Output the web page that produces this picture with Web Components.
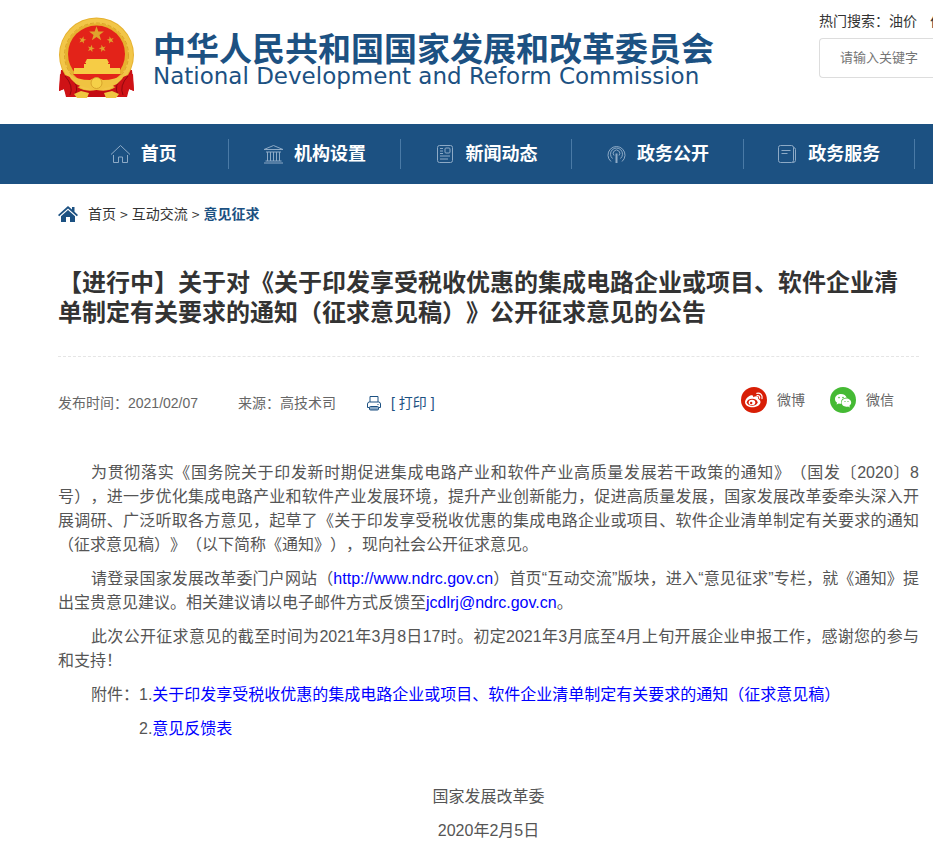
<!DOCTYPE html>
<html lang="zh-CN">
<head>
<meta charset="utf-8">
<title>中华人民共和国国家发展和改革委员会</title>
<style>
  body {
    --blue: #1c5182;
    margin: 0;
    background: #fff;
    color: #333;
    font: 14px/20px "Liberation Sans", "Noto Sans CJK SC", sans-serif;
    text-spacing-trim: space-all;
  }
</style>
</head>
<body>
<site-header></site-header>
<site-nav>
  <nav-item icon="home">首页</nav-item>
  <nav-item icon="bank">机构设置</nav-item>
  <nav-item icon="news">新闻动态</nav-item>
  <nav-item icon="signal">政务公开</nav-item>
  <nav-item icon="book">政务服务</nav-item>
</site-nav>
<main>
  <bread-crumb></bread-crumb>
  <notice-article>
    <span slot="title">【进行中】关于对《关于印发享受税收优惠的集成电路企业或项目、软件企业清单制定有关要求的通知（征求意见稿）》公开征求意见的公告</span>
    <article-meta slot="meta" date="2021/02/07" source="高技术司">
      <share-link type="weibo">微博</share-link>
      <share-link type="wechat">微信</share-link>
    </article-meta>
  </notice-article>
</main>

<script>
const ICONS = {
  home: '<path d="M1 10.5 10.500 1.500 20 10.500M3.500 11v7.500h5v-5.500h4v5.500h5V11"/>',
  bank: '<path d="M1 5.500 10.500 1.500 20 5.500zM3 8h15M4.500 8v9M7.500 8v9M10.500 8v9M13.500 8v9M16.500 8v9M2.500 17h16M1 19h19"/>',
  news: '<rect x="2.500" y="1.500" width="15" height="17" rx="2"/><rect x="10" y="4" width="5" height="5" rx="1"/><path d="M5 4.500h3M5 7h3M5 9.500h3M5 12h10M5 15h8"/>',
  signal: '<path d="M5 17.500a8.500 8.500 0 1 1 11 0M6.500 14.500a6 6 0 1 1 8 0M8 11.500a3.300 3.300 0 1 1 5 0"/><path d="M10.500 9.500v9.500" stroke-width="2"/>',
  book: '<rect x="1.500" y="1.500" width="15" height="17" rx="2"/><path d="M16.500 3.500q2 0 2 2v11q0 2-3 2M4.500 6.500h9M4.500 9.500h6"/>'
};

const SHARE = {
  weibo: `
    <circle cx="13" cy="13" r="13" fill="#d81e06"/>
    <path fill="#fff" d="M10.300 8.300C8.500 8 4 12 4 15.200c0 3 3.700 5 7.500 5 4.700 0 8-2.700 8-5.300 0-1.700-1.400-2.500-2.400-2.800.5-1.500.1-2.500-1.100-2.700-1.200-.2-2.600.3-3.900.8.400-1.200.1-2.100-1.800-1.900z"/>
    <ellipse cx="11.200" cy="15.300" rx="5.400" ry="3.500" fill="#d81e06"/>
    <ellipse cx="11" cy="15.400" rx="3.300" ry="2.600" fill="#fff"/>
    <circle cx="10.200" cy="16" r="1.200" fill="#d81e06"/>
    <path d="M15.800 6.300c3.500-.8 6.200 2 5.200 5.400M16.100 8.700c1.700-.4 3 .9 2.500 2.500" fill="none" stroke="#fff" stroke-width="1.200" stroke-linecap="round"/>`,
  wechat: `
    <circle cx="13" cy="13" r="13" fill="#45ba34"/>
    <path fill="#fff" d="M11 7c-3.600 0-6 2.300-6 5 0 1.600.8 2.900 2.100 3.800L6.500 17.600l2.300-1.100q1.100.3 2.400.3C10.300 13 13 10.700 16.700 10.800 16.100 8.500 13.800 7 11 7z"/>
    <path fill="#fff" d="M16.400 11.500c-2.800 0-4.900 1.900-4.900 4.100s2.100 4.100 4.900 4.100q.9 0 1.700-.3l1.700 1-.4-1.600c1.100-.8 1.800-1.900 1.800-3.200 0-2.200-2.200-4.100-4.800-4.100z"/>
    <g fill="#45ba34"><circle cx="9" cy="10.600" r=".8"/><circle cx="13" cy="10.600" r=".8"/><circle cx="15" cy="14.500" r=".6"/><circle cx="18" cy="14.500" r=".6"/></g>`
};

const STAR = 'M0-10 2.400-3.100 9.500-3.100 3.800 1.200 5.900 8.100 0 4-5.900 8.100-3.800 1.200-9.500-3.100-2.400-3.100z';

class SiteHeader extends HTMLElement {
  constructor() {
    super();
    this.attachShadow({mode: 'open'});
    this.shadowRoot.innerHTML = `
      <style>
        :host { display: block; overflow: hidden; }
        header { display: flex; height: 124px; padding-left: 58px; }
        .logo { display: flex; flex: none; gap: 17px; padding-top: 16px; color: var(--blue); text-decoration: none; }
        .logo svg { width: 78px; height: 84px; }
        .names { display: flex; flex-direction: column; padding-top: 14px; }
        .zh { font: bold 33px/34px "Noto Sans CJK SC", sans-serif; white-space: nowrap; }
        .en { font: 23px/24px "DejaVu Sans", sans-serif; white-space: nowrap; }
        .search { flex: 1; min-width: 0; margin-left: 105px; padding-top: 11px; }
        .hot { display: flex; margin-bottom: 7px; white-space: nowrap; }
        .hot a { flex: none; margin-right: 13px; color: inherit; text-decoration: none; }
        input {
          box-sizing: border-box;
          width: 100%;
          height: 40px;
          padding: 0 0 4px 20px;
          border: 1px solid #ddd;
          border-right: 0;
          border-radius: 4px 0 0 4px;
          font: 13px "Noto Sans CJK SC", sans-serif;
        }
        input::placeholder { color: #757575; }
      </style>
      <header>
        <a class="logo" href="#">
          <svg viewBox="0 0 78 84" aria-hidden="true">
            <path d="M3 54 1 75l5-2 3 8h59l3-8 5 2-2-21z" fill="#c90f14"/>
            <circle cx="38.500" cy="39" r="37.500" fill="#e6b12f"/>
            <circle cx="38.500" cy="39" r="34" fill="none" stroke="#f2c648" stroke-width="5"/>
            <circle cx="38.500" cy="39" r="32" fill="none" stroke="#dba32a" stroke-width="1" stroke-dasharray="4 2"/>
            <circle cx="38.500" cy="38" r="28.500" fill="#e32319"/>
            <g fill="#dfa32d">
              <path d="${STAR}" transform="translate(38.500 18) scale(.78)"/>
              <path d="${STAR}" transform="translate(24.500 24) rotate(15) scale(.38)"/>
              <path d="${STAR}" transform="translate(52.500 24) rotate(-15) scale(.38)"/>
              <path d="${STAR}" transform="translate(33 32.500) rotate(15) scale(.38)"/>
              <path d="${STAR}" transform="translate(44.500 32.500) rotate(-15) scale(.38)"/>
            </g>
            <path d="M29 43h20l2 4H27zM28 47h22v1H28zM26 48h26v4H26zM16 52h46v6H16z" fill="#f6cc45"/>
            <path d="M15 58h48l-8 7H22z" fill="#e32319"/>
            <path d="M2 58q13 2 22 11l-6 3 3 9H8l-2-8-5 2zM75 58q-13 2-22 11l6 3-3 9h13l2-8 5 2z" fill="#cf1216"/>
            <path d="M7 60q9 10 5 19M12 61q10 8 5 18M70 60q-9 10-5 19M65 61q-10 8-5 18" fill="none" stroke="#8f070d" stroke-width="1"/>
            <path d="M10 58q10 6 22 6 6-4 13 0 12 0 22-6-5 12-20 14-8 5-17 0-15-2-20-14z" fill="#f0c341"/>
            <circle cx="38.500" cy="67" r="5.500" fill="#f5d048" stroke="#d8a42c"/>
            <path d="M22 73q8 3 16.500 1 9 2 16.500-1l-5 8H28z" fill="#c40c13"/>
            <path d="m16 78 7-3 8 2-2 5H19zM61 78l-7-3-8 2 2 5h10z" fill="#efc640"/>
          </svg>
          <span class="names">
            <span class="zh">中华人民共和国国家发展和改革委员会</span>
            <span class="en">National Development and Reform Commission</span>
          </span>
        </a>
        <div class="search">
          <div class="hot"><span>热门搜索：</span><a href="#">油价</a><a href="#">价格</a></div>
          <input type="text" placeholder="请输入关键字" aria-label="请输入关键字">
        </div>
      </header>
    `;
  }
}

class SiteNav extends HTMLElement {
  constructor() {
    super();
    this.attachShadow({mode: 'open'});
    this.shadowRoot.innerHTML = `
      <style>
        :host { display: block; background: var(--blue); }
        nav { display: flex; align-items: center; height: 60px; padding: 0 18px 0 58px; }
      </style>
      <nav><slot></slot></nav>
    `;
  }
}

class NavItem extends HTMLElement {
  constructor() {
    super();
    this.attachShadow({mode: 'open'});
  }

  connectedCallback() {
    this.shadowRoot.innerHTML = `
      <style>
        :host { display: block; flex: 1; border-right: 1px solid #4a7aa6; }
        a {
          display: flex;
          align-items: center;
          justify-content: center;
          gap: 10px;
          height: 30px;
          color: #fff;
          font-size: 18px;
          font-weight: bold;
          text-decoration: none;
          white-space: nowrap;
        }
        svg { width: 21px; height: 20px; fill: none; stroke: #8daac6; stroke-width: 1; }
      </style>
      <a href="#"><svg viewBox="0 0 21 20" aria-hidden="true">${ICONS[this.getAttribute('icon')]}</svg><span><slot></slot></span></a>
    `;
  }
}

class BreadCrumb extends HTMLElement {
  constructor() {
    super();
    this.attachShadow({mode: 'open'});
    this.shadowRoot.innerHTML = `
      <style>
        :host { display: block; padding: 20px 14px 0 58px; }
        nav { display: flex; align-items: center; }
        svg { width: 20px; height: 18px; margin-right: 10px; fill: var(--blue); }
        a { color: inherit; text-decoration: none; }
        i { margin: 0 4px; font: 14px/20px "Noto Sans CJK SC", sans-serif; }
        .current { color: var(--blue); font-weight: bold; }
      </style>
      <nav aria-label="当前位置">
        <svg viewBox="0 0 20 18" aria-hidden="true"><path d="M10 1 14 4.600V2h2.500v4.800L20 10l-1.200 1.300L10 3.500 1.200 11.300 0 10zM10 5l7 6.200V17h-5v-5H8v5H3v-5.800z"/></svg>
        <a href="#">首页</a><i>&gt;</i><a href="#">互动交流</a><i>&gt;</i><a class="current" href="#">意见征求</a>
      </nav>
    `;
  }
}

class ArticleMeta extends HTMLElement {
  constructor() {
    super();
    this.attachShadow({mode: 'open'});
  }

  connectedCallback() {
    this.shadowRoot.innerHTML = `
      <style>
        :host { display: flex; align-items: flex-end; gap: 40px; color: #666; }
        button {
          display: flex;
          align-items: center;
          gap: 9px;
          margin-left: -10px;
          padding: 0;
          border: 0;
          background: none;
          color: var(--blue);
          font: inherit;
        }
        svg { width: 16px; height: 16px; fill: none; stroke: var(--blue); stroke-width: 1; }
        .share { display: flex; gap: 25px; margin-left: auto; padding-right: 25px; }
      </style>
      <span>发布时间：${this.getAttribute('date')}</span>
      <span>来源：${this.getAttribute('source')}</span>
      <button type="button">
        <svg viewBox="0 0 16 16" aria-hidden="true"><path d="M4 7V1.500h8V7M3.500 12.500h-2V9q0-2 2-2h9q2 0 2 2v3.500h-2"/><rect x="3.500" y="11.500" width="9" height="3.500" rx="1" fill="#8daac6"/><path d="M11.500 9.500h1"/></svg>
        <span>[ 打印 ]</span>
      </button>
      <div class="share"><slot></slot></div>
    `;
  }
}

class ShareLink extends HTMLElement {
  constructor() {
    super();
    this.attachShadow({mode: 'open'});
  }

  connectedCallback() {
    this.shadowRoot.innerHTML = `
      <style>
        :host { display: block; }
        a { display: flex; align-items: center; gap: 10px; color: inherit; text-decoration: none; }
        svg { width: 26px; height: 26px; }
      </style>
      <a href="#"><svg viewBox="0 0 26 26" aria-hidden="true">${SHARE[this.getAttribute('type')]}</svg><span><slot></slot></span></a>
    `;
  }
}

class NoticeArticle extends HTMLElement {
  constructor() {
    super();
    this.attachShadow({mode: 'open'});
    this.shadowRoot.innerHTML = `
      <style>
        :host { display: block; padding: 44px 14px 0 58px; }
        h1 { margin: 0; padding-bottom: 28px; border-bottom: 1px dashed #e5e5e5; font-size: 24px; line-height: 30px; }
        .meta { padding: 30px 0 48px; }
        .content { color: #555; font-size: 16px; line-height: 24px; text-align: justify; }
        p { margin: 0 0 10px; text-indent: 33px; }
        p a { color: #00f; text-decoration: none; }
        .second { text-indent: 81px; }
        .sign { text-align: center; text-indent: 0; }
        footer { padding-top: 34px; }
        .sign:last-child { margin-bottom: 0; }
      </style>
      <article>
        <h1><slot name="title"></slot></h1>
        <div class="meta"><slot name="meta"></slot></div>
        <div class="content">
          <p>为贯彻落实《国务院关于印发新时期促进集成电路产业和软件产业高质量发展若干政策的通知》（国发〔2020〕8号），进一步优化集成电路产业和软件产业发展环境，提升产业创新能力，促进高质量发展，国家发展改革委牵头深入开展调研、广泛听取各方意见，起草了《关于印发享受税收优惠的集成电路企业或项目、软件企业清单制定有关要求的通知（征求意见稿）》（以下简称《通知》），现向社会公开征求意见。</p>
          <p>请登录国家发展改革委门户网站（<a href="#">http://www.ndrc.gov.cn</a>）首页“互动交流”版块，进入“意见征求”专栏，就《通知》提出宝贵意见建议。相关建议请以电子邮件方式反馈至<a href="#">jcdlrj@ndrc.gov.cn</a>。</p>
          <p>此次公开征求意见的截至时间为2021年3月8日17时。初定2021年3月底至4月上旬开展企业申报工作，感谢您的参与和支持！</p>
          <p>附件：1.<a href="#">关于印发享受税收优惠的集成电路企业或项目、软件企业清单制定有关要求的通知（征求意见稿）</a></p>
          <p class="second">2.<a href="#">意见反馈表</a></p>
          <footer>
            <p class="sign">国家发展改革委</p>
            <p class="sign">2020年2月5日</p>
          </footer>
        </div>
      </article>
    `;
  }
}

customElements.define('site-header', SiteHeader);
customElements.define('site-nav', SiteNav);
customElements.define('nav-item', NavItem);
customElements.define('bread-crumb', BreadCrumb);
customElements.define('article-meta', ArticleMeta);
customElements.define('share-link', ShareLink);
customElements.define('notice-article', NoticeArticle);
</script>
</body>
</html>
